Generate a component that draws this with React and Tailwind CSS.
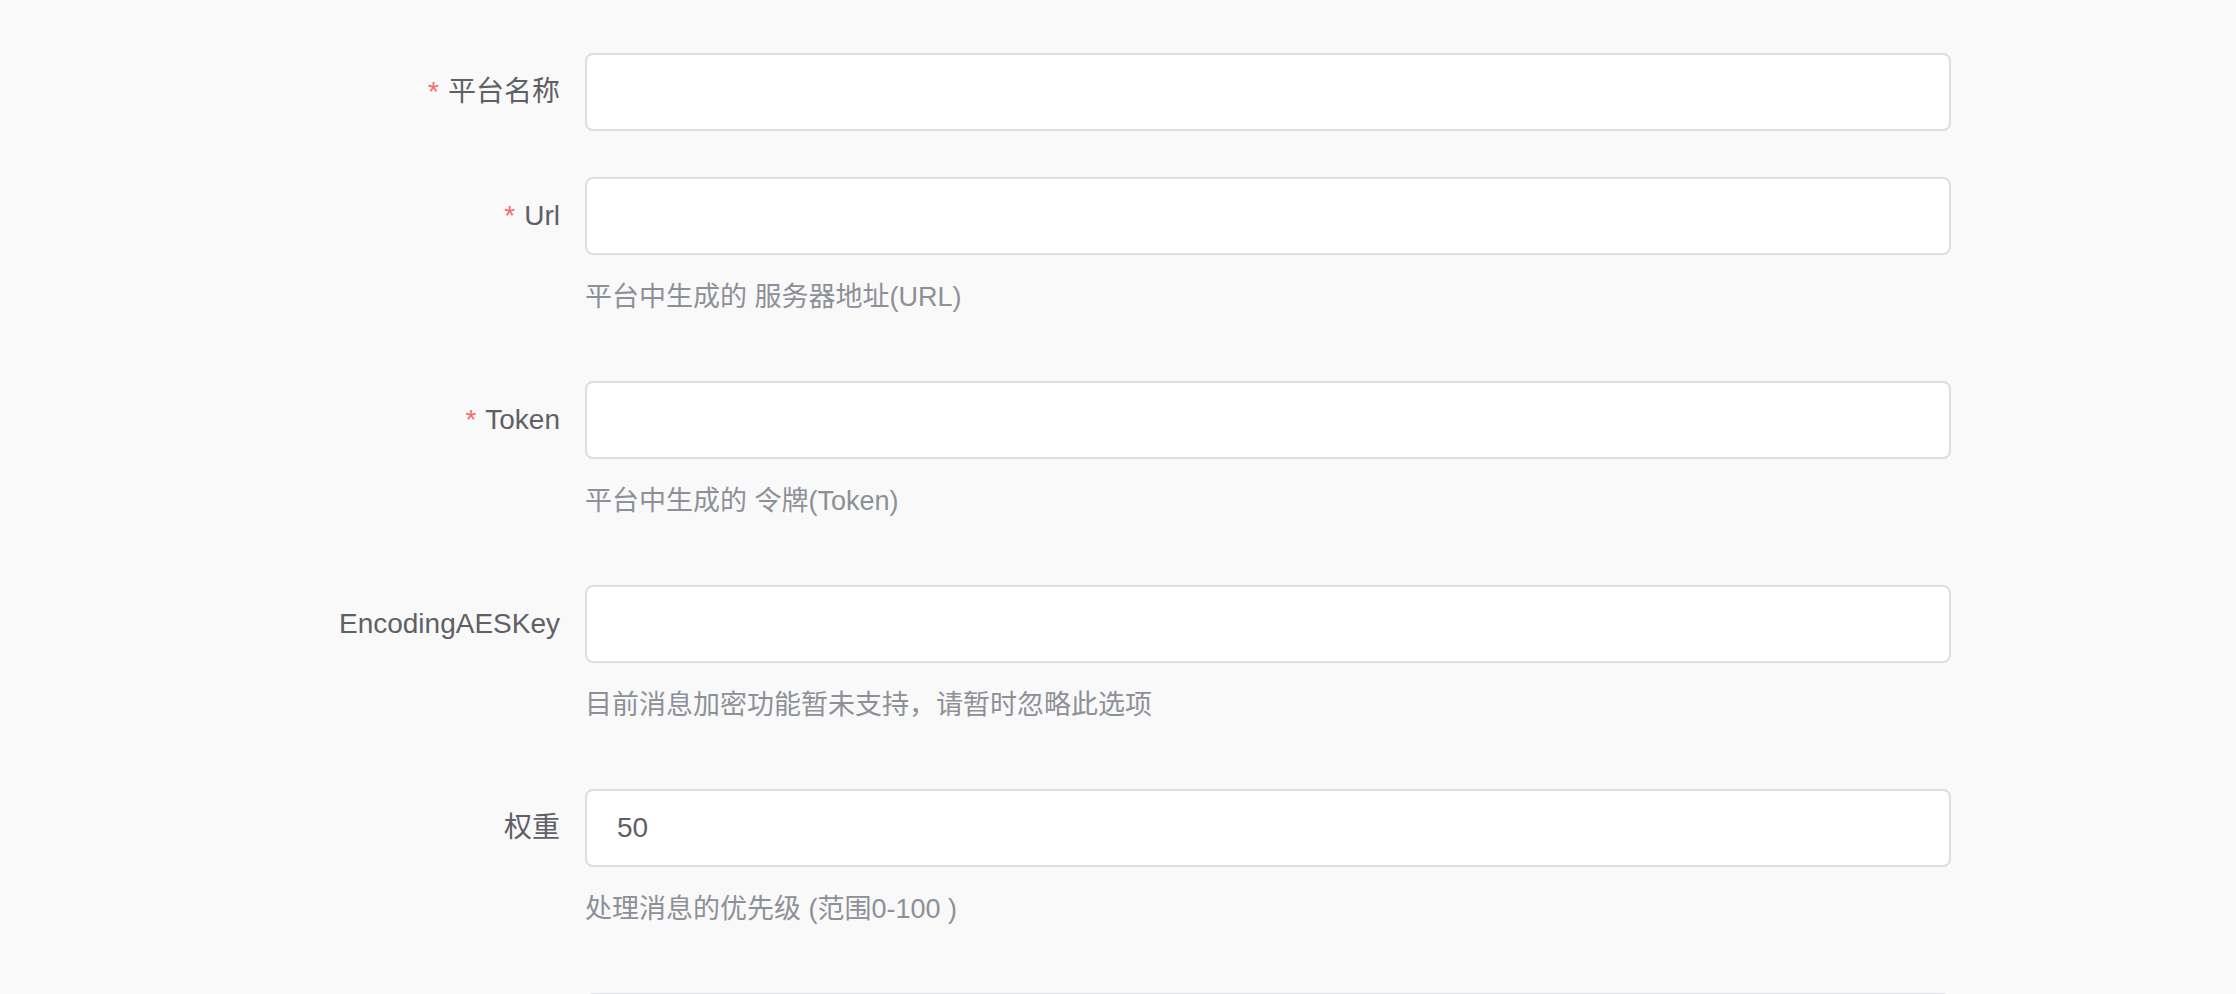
const fields = [
  { label: '平台名称', required: true },
  { label: 'Url', required: true, hint: '平台中生成的 服务器地址(URL)' },
  { label: 'Token', required: true, hint: '平台中生成的 令牌(Token)' },
  { label: 'EncodingAESKey', hint: '目前消息加密功能暂未支持，请暂时忽略此选项' },
  { label: '权重', value: '50', hint: '处理消息的优先级 (范围0-100 )' },
  { label: '' },
]

const FormRow = ({ label, required, hint, value }) => (
  <div className="flex mb-[46px]">
    <label className="w-[285px] shrink-0 pr-[25px] text-right text-[28px] leading-[78px] text-[#5e6066]">
      {required && <span className="text-[#f56c6c] mr-[9px]">*</span>}
      {label}
    </label>
    <div className="flex-1">
      <input
        defaultValue={value}
        className="block w-full h-[78px] rounded-[8px] border-2 border-[#dcdfe6] bg-white px-[30px] text-[28px] text-[#5e6066] outline-none"
      />
      {hint && (
        <div className="mt-[20px] mb-[16px] text-[27px] leading-[44px] text-[#8e9097]">{hint}</div>
      )}
    </div>
  </div>
)

const App = () => {
  return (
    <div
      className="h-[994px] overflow-hidden bg-[#f9f9fa] pt-[53px]"
      style={{ fontFamily: '"Liberation Sans", "Noto Sans CJK SC", sans-serif' }}
    >
      <form className="ml-[300px] w-[1651px]">
        {fields.map((f, i) => (
          <FormRow key={i} {...f} />
        ))}
      </form>
    </div>
  )
}

export default App
